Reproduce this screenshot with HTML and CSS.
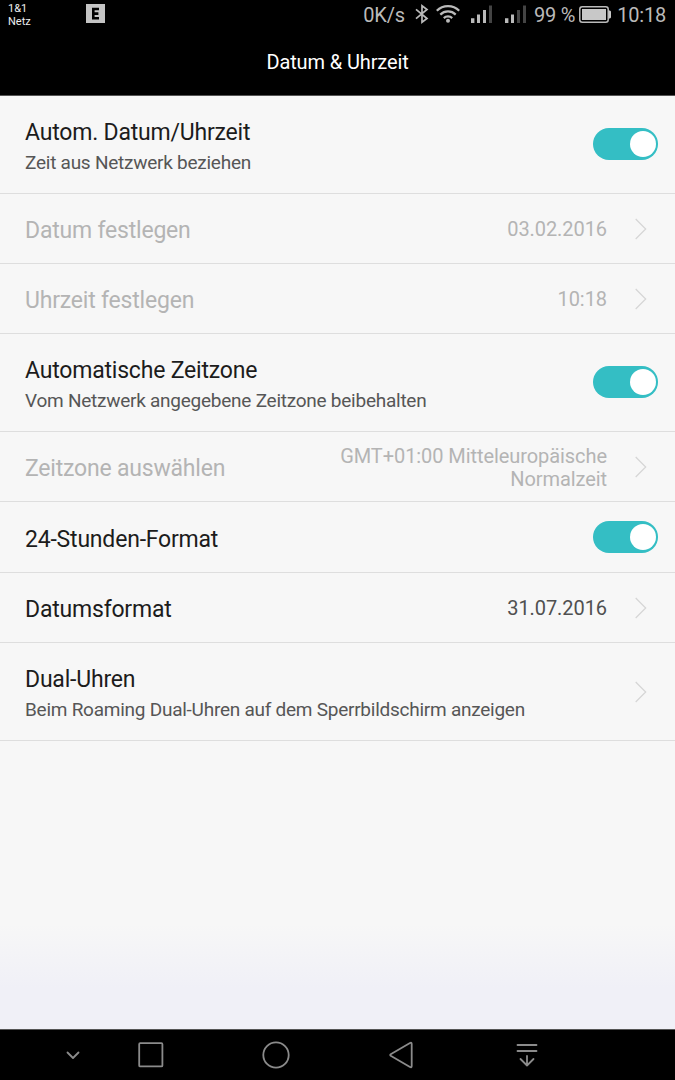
FILE: index.html
```
<!DOCTYPE html>
<html lang="de">
<head>
<meta charset="utf-8">
<title>Datum &amp; Uhrzeit</title>
<link rel="stylesheet" href="styles.css">
</head>
<body>
<div class="screen">
  <header class="top">
    <div class="status">
      <div class="carrier">1&amp;1<br>Netz</div>
      <svg class="app-icon" width="19" height="19" viewBox="0 0 19 19"><path fill="#c4c4c4" d="M0 0h19v19H0z"/><path fill="none" stroke="#000" stroke-width="2.6" d="M13 5H7.3v9.2H13M7 9.6h5.4"/></svg>
      <div class="indicators">
        <span class="rate">0K/s</span>
        <svg class="bluetooth" width="14" height="20" viewBox="0 0 14 20"><path fill="none" stroke="#bababa" stroke-width="1.7" d="M1 5.3l11 9.2L7 18.2V1.8l5 3.7L1 14.7"/></svg>
        <svg class="wifi" width="24" height="19" viewBox="0 0 24 19"><g fill="none" stroke="#bababa" stroke-width="2.2"><path d="M.8 6.8a15.6 15.6 0 0 1 22.4 0"/><path d="M4.3 10.6a11 11 0 0 1 15.4 0"/><path d="M7.8 14.1a6 6 0 0 1 8.4 0"/></g><circle cx="12" cy="16.8" r="2" fill="#bababa"/></svg>
        <svg class="signal" width="21" height="18" viewBox="0 0 21 18"><path fill="#bababa" d="M0 13.2h3.4V18H0zM6 9.5h3V18H6zM12 5h3v13h-3z"/><path fill="#444" d="M18 .5h3V18h-3z"/></svg>
        <svg class="signal second" width="21" height="18" viewBox="0 0 21 18"><path fill="#bababa" d="M0 13.2h3.4V18H0zM6 9.5h3V18H6z"/><path fill="#444" d="M12 5h3v13h-3zM18 .5h3V18h-3z"/></svg>
        <span class="percent">99 %</span>
        <svg class="battery" width="32" height="17" viewBox="0 0 32 17"><rect x=".8" y=".8" width="28.4" height="15.4" rx="2.5" fill="none" stroke="#bababa" stroke-width="1.5"/><path fill="#c8c8c8" d="M3 3h24v11H3zM29.5 4.5H31l1 1v6l-1 1h-1.5z"/></svg>
        <span class="clock">10:18</span>
      </div>
    </div>
    <h1 class="heading">Datum &amp; Uhrzeit</h1>
  </header>
  <main class="list">
    <section class="row tall">
      <div class="label"><div class="title">Autom. Datum/Uhrzeit</div><div class="sub">Zeit aus Netzwerk beziehen</div></div>
      <div class="switch"><span class="knob"></span></div>
    </section>
    <section class="row disabled">
      <div class="title">Datum festlegen</div><div class="value">03.02.2016</div>
      <svg class="chevron" width="12" height="22" viewBox="0 0 12 22"><path d="M.7 1l10 10-10 10"/></svg>
    </section>
    <section class="row disabled">
      <div class="title">Uhrzeit festlegen</div><div class="value">10:18</div>
      <svg class="chevron" width="12" height="22" viewBox="0 0 12 22"><path d="M.7 1l10 10-10 10"/></svg>
    </section>
    <section class="row tall">
      <div class="label"><div class="title">Automatische Zeitzone</div><div class="sub">Vom Netzwerk angegebene Zeitzone beibehalten</div></div>
      <div class="switch"><span class="knob"></span></div>
    </section>
    <section class="row disabled">
      <div class="title">Zeitzone auswählen</div><div class="value multi">GMT+01:00 Mitteleuropäische<br>Normalzeit</div>
      <svg class="chevron" width="12" height="22" viewBox="0 0 12 22"><path d="M.7 1l10 10-10 10"/></svg>
    </section>
    <section class="row format">
      <div class="title">24-Stunden-Format</div>
      <div class="switch"><span class="knob"></span></div>
    </section>
    <section class="row">
      <div class="title">Datumsformat</div><div class="value">31.07.2016</div>
      <svg class="chevron" width="12" height="22" viewBox="0 0 12 22"><path d="M.7 1l10 10-10 10"/></svg>
    </section>
    <section class="row tall">
      <div class="label"><div class="title">Dual-Uhren</div><div class="sub">Beim Roaming Dual-Uhren auf dem Sperrbildschirm anzeigen</div></div>
      <svg class="chevron" width="12" height="22" viewBox="0 0 12 22"><path d="M.7 1l10 10-10 10"/></svg>
    </section>
  </main>
  <nav class="navbar">
    <svg class="nav-hide" width="14" height="9" viewBox="0 0 14 9"><path d="M1.5 1.5L7 7l5.5-5.5"/></svg>
    <svg class="nav-recent" width="26" height="26" viewBox="0 0 26 26"><rect x="1.2" y="1.2" width="23.2" height="23.2" rx="1"/></svg>
    <svg class="nav-home" width="28" height="28" viewBox="0 0 28 28"><circle cx="14" cy="14" r="12.7"/></svg>
    <svg class="nav-back" width="24" height="28" viewBox="0 0 24 28"><path d="M1.7 13.2L21 2q1.7-.8 1.7 1v22q0 1.8-1.7 1L1.7 14.8q-1-.8 0-1.6z"/></svg>
    <svg class="nav-down" width="22" height="25" viewBox="0 0 22 25"><path d="M1.5 2h19M1.5 8h19M11 13v9.5M4.5 16l6.5 6.5 6.5-6.5"/></svg>
  </nav>
</div>
</body>
</html>
```
FILE: styles.css
```
* { box-sizing: border-box; }
body { margin: 0; font-family: Roboto, "Noto Sans", sans-serif; }
svg { display: block; flex: none; }

.screen {
  width: 675px;
  height: 1080px;
  display: flex;
  flex-direction: column;
  overflow: hidden;
  background: #000;
}

.top { height: 96px; background: #000; border-bottom: 1px solid #555; flex: none; }
.status { height: 29px; display: flex; align-items: flex-start; padding: 0 9px 0 8px; }
.carrier { width: 78px; padding-top: 2px; color: #eee; font-size: 11px; line-height: 13px; }
.app-icon { margin-top: 4px; }
.indicators {
  margin-left: auto;
  height: 29px;
  display: flex;
  align-items: center;
  color: #bababa;
  font-size: 20px;
  line-height: 29px;
  letter-spacing: -.2px;
  white-space: nowrap;
}
.rate, .percent, .clock { padding-top: 1px; }
.bluetooth { margin-left: 10px; margin-bottom: 1px; }
.wifi { margin-left: 7px; margin-bottom: 2px; }
.signal { margin-left: 11px; margin-bottom: 1px; }
.signal.second { margin-left: 13px; }
.percent { margin-left: 8px; }
.battery { margin-left: 4px; }
.clock { margin-left: 6px; }

.heading {
  margin: 0;
  height: 66px;
  color: #fff;
  font-size: 20px;
  font-weight: 400;
  line-height: 67px;
  letter-spacing: -.12px;
  text-align: center;
}

.list {
  flex: 1;
  background: linear-gradient(#f7f7f7 0 828px, #f0f0f7 892px);
}
.row {
  height: 70px;
  display: flex;
  align-items: center;
  padding: 0 17px 0 25px;
  border-bottom: 1px solid #dedede;
}
.row.tall { height: 98px; }
.row.format { height: 71px; }
.title { color: #1c1c1c; font-size: 23px; line-height: 28px; padding-top: 4px; letter-spacing: -.2px; white-space: nowrap; }
.label .title { padding-top: 3px; }
.format .title { padding-top: 5px; }
.sub { color: #565656; font-size: 19px; line-height: 24px; padding-top: 4px; letter-spacing: -.25px; white-space: nowrap; }
.label { padding-top: 2px; }
.value { margin-left: auto; color: #505050; font-size: 20px; line-height: 22px; letter-spacing: -.07px; text-align: right; white-space: nowrap; }
.value.multi { line-height: 23px; padding-top: 2px; }
.disabled .title, .disabled .value { color: #b4b4b4; }
.chevron { margin-left: 28px; margin-right: 11px; fill: none; stroke: #d5d5d5; stroke-width: 1.2; }
.label + .chevron { margin-left: auto; }
.switch {
  width: 65px;
  height: 32px;
  margin-left: auto;
  padding: 3px 2px;
  display: flex;
  justify-content: flex-end;
  border-radius: 16px;
  background: #34bec4;
}
.tall .switch { margin-bottom: 2px; }
.knob { width: 26px; height: 26px; border-radius: 50%; background: #fff; }

.navbar {
  height: 51px;
  flex: none;
  display: flex;
  align-items: center;
  padding-left: 66px;
  background: #000;
  border-top: 1px solid #555;
}
.navbar svg { fill: none; stroke: #8b8b8b; stroke-width: 1.8; stroke-linecap: round; stroke-linejoin: round; }
.nav-recent { margin-left: 58px; }
.nav-home { margin-left: 98px; }
.nav-back { margin-left: 99px; }
.nav-down { margin-left: 103px; }
```
